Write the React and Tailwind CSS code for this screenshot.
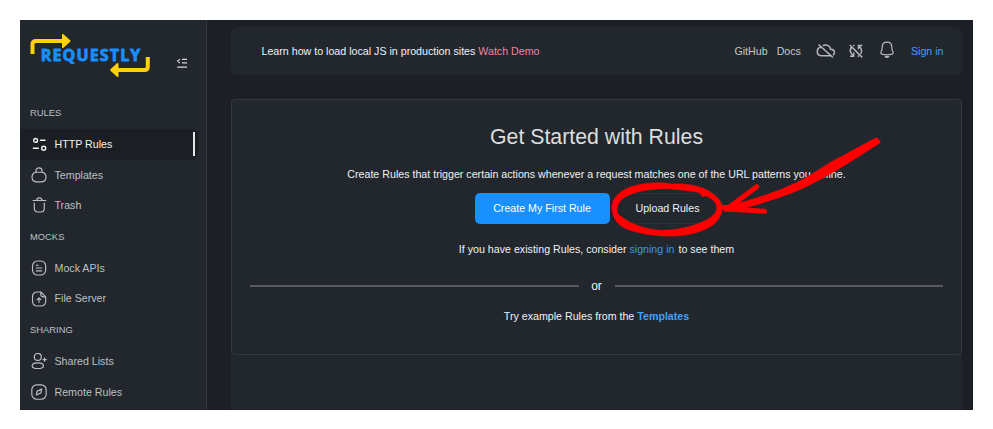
import React from "react";

const Icon = ({ children, className = "" }) => (
  <svg
    width="16"
    height="16"
    viewBox="0 0 16 16"
    fill="none"
    stroke="currentColor"
    strokeWidth="1.15"
    strokeLinecap="round"
    strokeLinejoin="round"
    className={`shrink-0 ${className}`}
  >
    {children}
  </svg>
);

const RulesIcon = () => (
  <Icon>
    <g strokeWidth="1.400">
      <circle cx="4.600" cy="4.400" r="1.900" />
      <path d="M9.500 4.300H14M2.300 12.300H7.300" />
      <circle cx="12.700" cy="12.300" r="2" />
    </g>
  </Icon>
);

const TemplatesIcon = () => (
  <Icon>
    <path d="M4.400 5.200h7.200c1.600.6 3.400 2.600 3.400 4.900 0 2.800-1.800 4.700-4.200 4.700H5.200C2.800 14.800 1 12.900 1 10.100c0-2.300 1.800-4.300 3.400-4.900Z" />
    <path d="M5 5V3.700c0-1.700 1.300-2.900 3-2.900s3 1.200 3 2.900V5" />
  </Icon>
);

const TrashIcon = () => (
  <Icon>
    <path d="M2 3.500H14.800M5.500 3.400c.3-1.700 1.300-2.500 2.800-2.500s2.500.8 2.800 2.500" />
    <path d="M3.300 6v5c0 2.700 1.200 4 3.400 4h3.200c2.200 0 3.400-1.300 3.400-4V6" />
  </Icon>
);

const MockIcon = () => (
  <Icon>
    <rect x="1.500" y="1" width="13.200" height="14" rx="5" />
    <path d="M5.200 5.200h2M5.200 8h5.600M5.200 10.800h5.600" />
  </Icon>
);

const FileIcon = () => (
  <Icon>
    <path d="M9.800 1H6.500c-3.300 0-5 1.700-5 5v4c0 3.300 1.700 5 5 5h3.200c3.300 0 5-1.700 5-5V5.800L9.800 1Z" />
    <path d="M9.800 1.400v1.900c0 1.600.9 2.500 2.500 2.500h2M8 11.300V6.900M6.100 8.700 8 6.800l1.900 1.900" />
  </Icon>
);

const SharedIcon = () => (
  <Icon>
    <circle cx="6.800" cy="3.900" r="3.500" />
    <ellipse cx="6.800" cy="12.700" rx="5.600" ry="2.900" />
    <path d="M13.600 4.900v3.400M11.900 6.600h3.400" />
  </Icon>
);

const RemoteIcon = () => (
  <Icon>
    <rect x=".8" y=".8" width="14.400" height="14.400" rx="5" />
    <path d="M10.700 5.100 9.800 9 5.300 11l.9-3.900L10.700 5.100Z" />
  </Icon>
);

const sections = [
  {
    title: "RULES",
    items: [
      ["HTTP Rules", RulesIcon],
      ["Templates", TemplatesIcon],
      ["Trash", TrashIcon],
    ],
  },
  {
    title: "MOCKS",
    items: [
      ["Mock APIs", MockIcon],
      ["File Server", FileIcon],
    ],
  },
  {
    title: "SHARING",
    items: [
      ["Shared Lists", SharedIcon],
      ["Remote Rules", RemoteIcon],
    ],
  },
];

const Logo = () => (
  <svg width="122" height="46" viewBox="29 32 122 46" className="shrink-0">
    <g fill="none" stroke="#fdd20a" strokeWidth="4">
      <path d="M32.500 54V44.500Q32.500 41 36 41H64" />
      <path d="M147.800 57V66.500Q147.800 70 144.300 70H117" />
    </g>
    <path
      d="M62.900 35 69.500 41 62.900 47.200ZM117.600 64 111.100 70 117.600 76.100Z"
      fill="#fdd20a"
      stroke="#fdd20a"
      strokeWidth="1.800"
      strokeLinejoin="round"
    />
    <text
      x="40.800"
      y="61.300"
      textLength="99.500"
      lengthAdjust="spacing"
      fill="#1890ff"
      stroke="#1890ff"
      strokeWidth=".8"
      strokeLinejoin="round"
      fontSize="16"
      fontWeight="700"
      fontFamily="'Open Sans', 'Noto Sans', sans-serif"
    >
      REQUESTLY
    </text>
  </svg>
);

const Sidebar = () => (
  <aside className="flex w-[187px] shrink-0 flex-col border-r border-[#343940] bg-[#22272d] text-[10.660px] text-[#bcc0c3]">
    <div className="flex h-[77px] shrink-0 items-start pl-[9px] pt-3">
      <Logo />
      <svg width="12" height="12" viewBox="0 0 12 12" fill="none" stroke="#d5d8da" strokeWidth="1.200" className="ml-[25px] mt-[25px]">
        <path d="M1.200 10.200H11M6 2.300h5M6 5.800h5M4 2.100 1.600 4.100 4 6.100" />
      </svg>
    </div>
    {sections.map((s) => (
      <section key={s.title}>
        <h2 className="flex h-[32px] items-center pb-px pl-[10px] text-[9.400px]">{s.title}</h2>
        {s.items.map(([label, Glyph]) =>
          label === "HTTP Rules" ? (
            <div key={label} className="mr-2 flex h-[30.6px] items-center rounded-r-md bg-[#1b1f24] pl-[11px] pr-[3px] text-[#f2f3f3]">
              <Glyph />
              <span className="ml-[7.500px] flex-1">{label}</span>
              <i className="h-[24px] w-[2px] bg-[#e4e6e7]" />
            </div>
          ) : (
            <div key={label} className="flex h-[30.6px] items-center pl-[11px]">
              <Glyph />
              <span className="ml-[7.500px]">{label}</span>
            </div>
          )
        )}
      </section>
    ))}
  </aside>
);

const CloudOff = () => (
  <svg width="20" height="16" viewBox="0 0 20 16" fill="none" stroke="#b4b9bd" strokeWidth="1.500">
    <path d="M2.500 1.500 17 14.500M5 4.300C2.700 4.600 1.300 6.300 1.300 8.600c0 2.500 1.700 4.100 4 4.100h9.500M6.800 2.700C10.200.8 14 2.700 14.600 6.200c2.300.1 3.800 1.300 3.800 3.300 0 1.200-.6 2.200-1.500 2.700" />
  </svg>
);

const SyncOff = () => (
  <svg width="14" height="14" viewBox="0 0 14 14" fill="none" stroke="#b4b9bd" strokeWidth="1.500">
    <path d="M.8 1 13.200 13.400M2.400 3.300C.8 5.600 1.200 8.800 3.700 11.200M1 12.200H4.700V8.600M4.100 1.800 5.500 1.100M13.300 1.500H9.500V5.200M10 2.100C12.600 4.300 13 7.400 11.800 9.800M8.600 12.500l1.300-.6" />
  </svg>
);

const Bell = () => (
  <svg width="14" height="18" viewBox="0 0 14 18" fill="none" stroke="#b4b9bd" strokeWidth="1.200" strokeLinecap="round" strokeLinejoin="round">
    <path d="M7 1.200c-3 0-4.800 2.100-4.800 4.900 0 2.400-.2 3-.9 4.200-1 1.700-.2 2.800 1.400 3.100 2.800.6 5.800.6 8.600 0 1.600-.3 2.400-1.400 1.400-3.100-.7-1.200-.9-1.800-.9-4.200 0-2.800-1.800-4.900-4.800-4.900Z" />
    <path d="M5.200 15.600c1 1 2.600 1 3.600 0Z" fill="#b4b9bd" />
  </svg>
);

const Header = () => (
  <header className="flex h-[48px] shrink-0 items-center rounded-md bg-[#22272d] pl-[30.500px] pr-[18.500px] text-[10.660px] text-[#c3c7ca]">
    <p className="flex-1 whitespace-nowrap text-[#f0f1f1]">
      Learn how to load local JS in production sites <span className="text-[#f4809f]">Watch Demo</span>
    </p>
    <span>GitHub</span>
    <span className="ml-[9px]">Docs</span>
    <span className="ml-[15px]"><CloudOff /></span>
    <span className="ml-[13px]"><SyncOff /></span>
    <span className="-mt-[3px] ml-[17px]"><Bell /></span>
    <span className="ml-[17px] text-[#40a0fb]">Sign in</span>
  </header>
);

const Annotation = () => (
  <svg width="300" height="130" viewBox="0 0 900 390" className="pointer-events-none absolute left-[600px] top-[120px]" fill="#fe0000">
    <path
      fillRule="evenodd"
      stroke="#fe0000"
      strokeWidth="2"
      d="M36 264C35 235 60 208 105 197C150 186 185 187 215 192C265 190 300 198 326 213C354 230 368 248 367 264C366 292 345 314 318 327C280 344 240 349 200 348C150 347 85 335 60 315C45 302 37 285 36 264Z
      M52 260C49 274 52 284 64 290C95 314 140 330 190 331C235 331 275 320 305 307C338 292 353 277 350 260C348 245 336 236 318 227C312 231 303 230 302 222C300 216 290 216 270 213C245 208 225 209 205 206C170 206 145 208 115 215C78 224 57 240 52 260Z"
    />
    <path d="M825 54C832 51 837 58 837 60C844 63 843 69 836 72L745 130C690 164 655 184 610 205C565 226 500 246 445 262L400 273L374 276L368 256L395 254C460 239 545 210 603 180C645 158 680 131 720 111Z" />
    <path d="M470 200 385 264M372 263 382 267 494 274" fill="none" stroke="#fe0000" strokeWidth="15" strokeLinecap="round" strokeLinejoin="round" />
  </svg>
);

export default function App() {
  return (
    <div className="relative h-[429px] w-[993px] overflow-hidden bg-white p-5 font-['Liberation_Sans',Arial,sans-serif] leading-none">
      <div className="flex h-[390px] w-[953px] overflow-hidden bg-[#1c2026]">
        <Sidebar />
        <main className="flex flex-1 flex-col pl-[24px] pr-[11px] pt-[7px]">
          <Header />
          <div className="mt-[24px] flex-1 bg-[#22272d]">
            <section className="flex h-[256px] flex-col items-center rounded-sm border border-[#34393f] px-[18px] text-[10.660px] text-[#f0f1f1]">
              <h1 className="mt-[25px] text-[21.300px] leading-[24px] text-[#dcdedf]">Get Started with Rules</h1>
              <p className="mt-[19px] whitespace-nowrap leading-[12px]">
                Create Rules that trigger certain actions whenever a request matches one of the URL patterns you define.
              </p>
              <div className="mt-[13px] flex gap-[7px]">
                <button className="h-[31px] w-[135px] rounded-[5px] bg-[#1890ff] text-white">Create My First Rule</button>
                <button className="h-[31px] w-[102px] rounded-[5px] border border-[#2b3036]">Upload Rules</button>
              </div>
              <p className="mt-[19px] whitespace-pre leading-[12px]">
                If you have existing Rules, consider <span className="text-[#3c96ea]">signing in</span>
                <span className="ml-[4px]">to see them</span>
              </p>
              <div className="mt-[24px] flex w-full items-center text-[12px] leading-[14px]">
                <i className="h-[2px] flex-1 bg-[#575b60]" />
                <span className="w-[36px] text-center">or</span>
                <i className="h-[2px] flex-1 bg-[#575b60]" />
              </div>
              <p className="mt-[17px] leading-[12px]">
                Try example Rules from the <b className="text-[#40a0fb]">Templates</b>
              </p>
            </section>
          </div>
        </main>
      </div>
      <Annotation />
    </div>
  );
}
